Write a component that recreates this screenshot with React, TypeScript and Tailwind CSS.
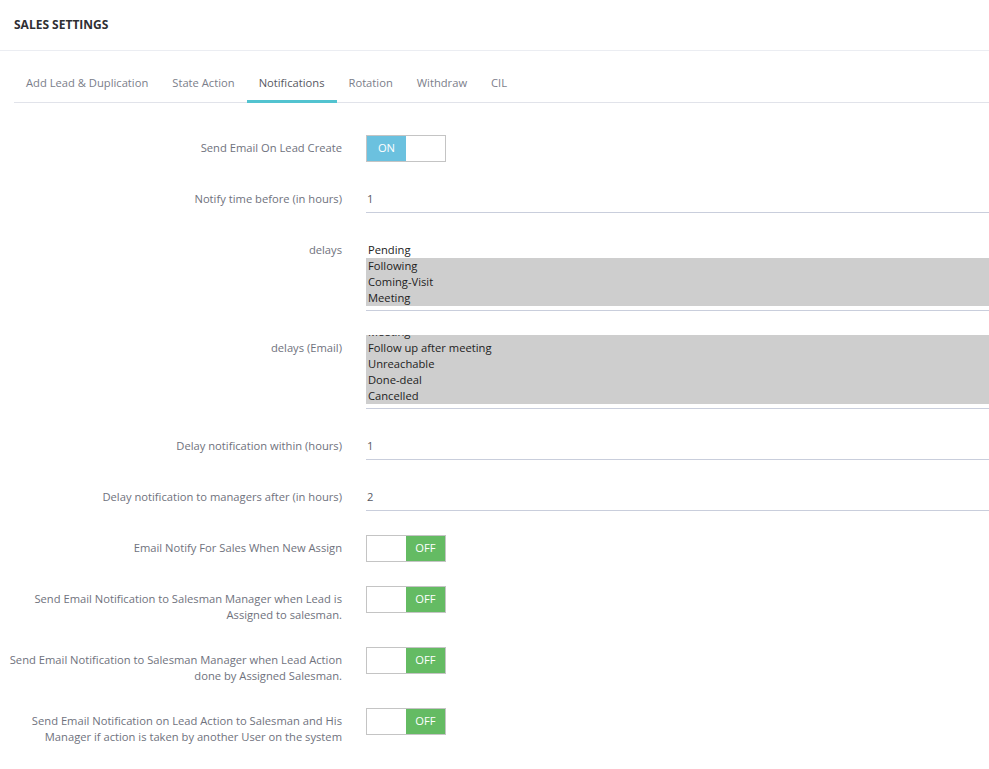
import React from "react";

const TABS = ["Add Lead & Duplication", "State Action", "Notifications", "Rotation", "Withdraw", "CIL"];

function Label({ children }: { children: React.ReactNode }) {
  return (
    <div className="w-[342px] shrink-0 pl-2 pt-[5px] text-right text-[11.2px] leading-4 text-[#6f727d]">
      {children}
    </div>
  );
}

function Toggle({ on }: { on: boolean }) {
  return (
    <div className="flex h-[27px] w-[80px] border border-[#c4c4c4] bg-white text-[11.2px] text-white">
      {on ? (
        <>
          <div className="flex w-[39px] items-center justify-center bg-[#6bc1df]">ON</div>
          <div className="flex-1" />
        </>
      ) : (
        <>
          <div className="flex-1" />
          <div className="flex w-[39px] items-center justify-center bg-[#64bb63]">OFF</div>
        </>
      )}
    </div>
  );
}

function TextInput({ value }: { value: string }) {
  return (
    <div className="flex h-[27px] items-center border-b border-[#c9cedc] pl-[1px] text-[11.2px] text-[#575962]">
      {value}
    </div>
  );
}

function Row({ label, children }: { label: React.ReactNode; children: React.ReactNode }) {
  return (
    <div className="flex">
      <Label>{label}</Label>
      <div className="ml-6 flex-1">{children}</div>
    </div>
  );
}

function ListItem({ text, selected }: { text: string; selected?: boolean }) {
  return (
    <div className={`h-4 pl-[2px] text-[11.2px] leading-4 text-[#222] ${selected ? "bg-[#cecece]" : ""}`}>{text}</div>
  );
}

export default function App() {
  return (
    <div className="min-h-screen bg-white font-['Open_Sans',sans-serif]">
      {/* Header */}
      <div className="flex h-[51px] items-center border-b border-[#ebedf2] px-[14px]">
        <h3 className="text-[12px] font-bold uppercase text-[#2f2f33]">Sales Settings</h3>
      </div>

      {/* Tabs */}
      <div className="ml-[14px] flex border-b border-[#e1e3ea] pt-[24px]">
        {TABS.map((t) => (
          <div
            key={t}
            className={`-mb-px px-3 pb-[9px] text-[11.2px] leading-4 ${
              t === "Notifications"
                ? "border-b-[3px] border-[#52c3d0] text-[#575962]"
                : "border-b-[3px] border-transparent text-[#7b7e8a]"
            }`}
          >
            {t}
          </div>
        ))}
      </div>

      {/* Form */}
      <div className="flex flex-col gap-6 pt-8 pb-8">
        <Row label="Send Email On Lead Create">
          <Toggle on />
        </Row>
        <Row label="Notify time before (in hours)">
          <TextInput value="1" />
        </Row>
        <Row label="delays">
          <div className="h-[74px] border-b border-[#c9cedc] pt-[5px]">
            <ListItem text="Pending" />
            <ListItem text="Following" selected />
            <ListItem text="Coming-Visit" selected />
            <ListItem text="Meeting" selected />
          </div>
        </Row>
        <Row label="delays (Email)">
          <div className="h-[74px] border-b border-[#c9cedc]">
            <div className="h-[69px] overflow-hidden">
              <div className="-mt-[11px]">
                <ListItem text="Meeting" selected />
                <ListItem text="Follow up after meeting" selected />
                <ListItem text="Unreachable" selected />
                <ListItem text="Done-deal" selected />
                <ListItem text="Cancelled" selected />
              </div>
            </div>
          </div>
        </Row>
        <Row label="Delay notification within (hours)">
          <TextInput value="1" />
        </Row>
        <Row label="Delay notification to managers after (in hours)">
          <TextInput value="2" />
        </Row>
        <Row label="Email Notify For Sales When New Assign">
          <Toggle on={false} />
        </Row>
        <Row
          label={
            <>
              Send Email Notification to Salesman Manager when Lead is
              <br />
              Assigned to salesman.
            </>
          }
        >
          <Toggle on={false} />
        </Row>
        <Row
          label={
            <>
              Send Email Notification to Salesman Manager when Lead Action
              <br />
              done by Assigned Salesman.
            </>
          }
        >
          <Toggle on={false} />
        </Row>
        <Row
          label={
            <>
              Send Email Notification on Lead Action to Salesman and His
              <br />
              Manager if action is taken by another User on the system
            </>
          }
        >
          <Toggle on={false} />
        </Row>
      </div>
    </div>
  );
}
